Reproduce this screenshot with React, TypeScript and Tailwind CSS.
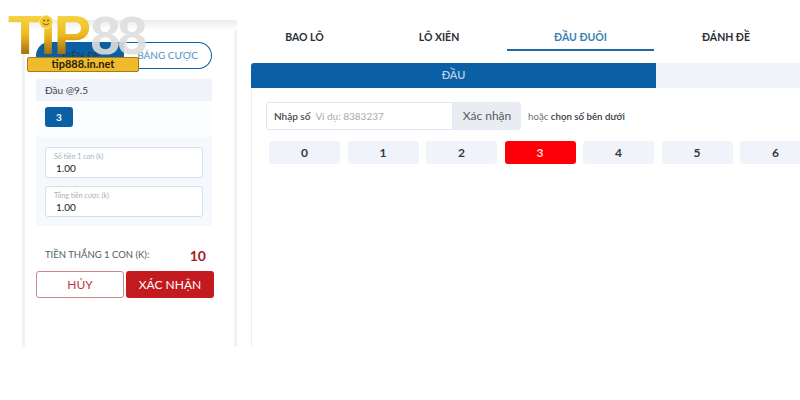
const digits = ["0", "1", "2", "3", "4", "5", "6"];
const tabs = [
  { label: "BAO LÔ", cls: "w-[107px] text-center" },
  { label: "LÔ XIÊN", cls: "w-[136px] ml-[13px] text-center" },
  { label: "ĐẦU ĐUÔI", cls: "w-[147px] h-[21px] text-center border-b-2 border-[#1f6aa5] text-[#3b7fae]" },
  { label: "ĐÁNH ĐỀ", cls: "w-[144px] text-center" },
];

function Logo() {
  return (
    <div className="absolute left-[8px] top-[10px] w-[140px] h-[64px]">
      <div className="relative flex h-[47px] items-start">
        <span className="text-[56px] leading-[50px] font-black tracking-[-2px] text-transparent bg-clip-text bg-gradient-to-b from-[#f7dc4a] via-[#eeb81f] to-[#8f5c08] font-['Liberation_Sans',sans-serif]">
          TıP
        </span>
        <span className="ml-[1px] text-[54px] leading-[50px] font-black tracking-[-3px] text-[#dedede]/90 font-['Liberation_Sans',sans-serif]">
          88
        </span>
        <svg className="absolute left-[31px] top-[5px]" width="14" height="14" viewBox="0 0 14 14">
          <circle cx="7" cy="7" r="6.5" fill="#f2c832" stroke="#fbe98a" />
          <circle cx="5" cy="5.5" r="1" fill="#8a5f0a" />
          <circle cx="9" cy="5.5" r="1" fill="#8a5f0a" />
          <path d="M4 8.5 Q7 11.5 10 8.5" fill="none" stroke="#8a5f0a" strokeWidth="1" />
        </svg>
      </div>
      <div className="ml-[19px] w-[112px] h-[15px] bg-[#efbb2c] border border-[#a87d12] rounded-[2px] flex items-center justify-center text-[11px] font-bold text-[#2a2208]">
        tip888.in.net
      </div>
    </div>
  );
}

function MoneyInput({ label }: { label: string }) {
  return (
    <div className="h-[31px] bg-white border border-[#d8dfe9] rounded-[3px] pl-[8px] pt-[3px]">
      <div className="text-[7px] leading-[10px] text-[#a9afb8]">{label}</div>
      <div className="text-[10px] leading-[14px] pl-[2px] text-[#222]">1.00</div>
    </div>
  );
}

function Sidebar() {
  return (
    <aside className="w-[215px] ml-[22px] border-x-[3px] border-[#f1f2f4] shrink-0">
      <div className="h-[10px] bg-gradient-to-b from-[#ececec] to-white -mx-[3px]" />
      <div className="pl-[11px] pt-[12px] w-[190px]">
        <div className="flex h-[27px] w-[176px] text-[10px]">
          <div className="w-[88px] bg-[#0b5fa5] text-[#1d3a55] rounded-l-full flex items-center justify-center pl-[2px]">
            BIÊN ĐỀ
          </div>
          <div className="w-[88px] border border-[#0b5fa5] border-l-0 rounded-r-full flex items-center justify-center text-[#4f92c4]">
            BẢNG CƯỢC
          </div>
        </div>

        <div className="mt-[10px] w-[176px]">
          <div className="h-[22px] bg-[#f0f4fa] pl-[9px] text-[10px] leading-[22px] text-[#3a3f45] rounded-t-[2px]">
            Đầu @9.5
          </div>
          <div className="h-[36px] pl-[9px] pt-[6px] bg-[#fcfdfe]">
            <div className="w-[28px] h-[20px] bg-[#0b5fa5] rounded-[3px] text-white text-[10px] font-bold flex items-center justify-center">
              3
            </div>
          </div>
          <div className="h-[89px] bg-[#f5f8fc] px-[9px] pt-[10px] flex flex-col gap-[8px] rounded-b-[3px]">
            <MoneyInput label="Số tiền 1 con (k)" />
            <MoneyInput label="Tổng tiền cược (k)" />
          </div>
        </div>

        <div className="mt-[20px] w-[176px] pl-[9px] pr-[6px] flex items-center justify-between h-[18px]">
          <span className="text-[9.5px] text-[#555b61]">TIỀN THẮNG 1 CON (K):</span>
          <span className="text-[14px] font-bold text-[#a51c1c]">10</span>
        </div>

        <div className="mt-[7px] flex gap-[2px] w-[178px] h-[27px] text-[12px]">
          <div className="w-[88px] border border-[#c98a8a] rounded-[3px] text-[#c0383c] flex items-center justify-center">
            HỦY
          </div>
          <div className="w-[88px] bg-[#c21a1f] rounded-[3px] text-white flex items-center justify-center">
            XÁC NHẬN
          </div>
        </div>
      </div>
    </aside>
  );
}

function BetPanel() {
  return (
    <section className="ml-[14px] flex-1 min-w-0 border-t border-[#fdfbf3]">
      <div className="flex h-[28px] pt-[9px] text-[10.5px] font-bold text-[#2b2f33]">
        {tabs.map((t) => (
          <div key={t.label} className={t.cls}>
            {t.label}
          </div>
        ))}
      </div>

      <div className="mt-[14px] flex h-[25px] text-[11px]">
        <div className="w-[405px] bg-[#0b5fa5] rounded-tl-[3px] text-[#b8d2e8] font-semibold flex items-center justify-center">
          ĐẦU
        </div>
        <div className="flex-1 bg-[#f1f4f9]" />
      </div>

      <div className="border-l border-[#eceef1] h-[259px] pl-[14px] pt-[14px]">
        <div className="flex items-center h-[28px]">
          <div className="w-[187px] h-full border border-[#e4e7ec] rounded-l-[3px] pl-[7px] flex items-center gap-[5px] text-[10px]">
            <span className="font-semibold text-[#444a50]">Nhập số</span>
            <span className="text-[#a5aab0]">Ví dụ: 8383237</span>
          </div>
          <div className="w-[68px] h-full bg-[#e9edf3] rounded-r-[3px] flex items-center justify-center text-[12px] text-[#555b61]">
            Xác nhận
          </div>
          <div className="ml-[7px] text-[9.7px] text-[#6a7076]">
            hoặc <span className="font-semibold text-[#33383d]">chọn số bên dưới</span>
          </div>
        </div>

        <div className="mt-[11px] ml-[3px] flex gap-[7.5px] w-[560px]">
          {digits.map((d) => (
            <div
              key={d}
              className={
                d === "3"
                  ? "w-[71px] h-[23px] shrink-0 rounded-[3px] bg-[#fb0007] text-[#ffd9d9] text-[12px] font-bold flex items-center justify-center"
                  : "w-[71px] h-[23px] shrink-0 rounded-[3px] bg-[#f0f4fa] text-[#33383d] text-[12px] font-bold flex items-center justify-center"
              }
            >
              {d}
            </div>
          ))}
        </div>
      </div>
    </section>
  );
}

export default function App() {
  return (
    <div className="relative w-[800px] h-[400px] overflow-hidden bg-white pt-[20px] font-['Lato',sans-serif]">
      <div className="flex h-[327px]">
        <Sidebar />
        <BetPanel />
      </div>
      <Logo />
    </div>
  );
}
